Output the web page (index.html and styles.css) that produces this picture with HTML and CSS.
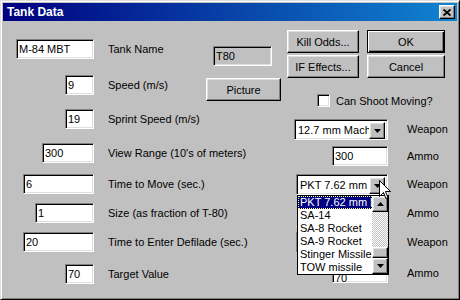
FILE: index.html
```html
<!DOCTYPE html>
<html lang="en">
<head>
  <meta charset="UTF-8">
  <title>Tank Data</title>
  <link rel="stylesheet" href="styles.css">
</head>
<body>
  <div class="window">
    <div class="titlebar">
      <span class="title">Tank Data</span>
      <div class="btn close-btn">
        <svg width="8" height="7" viewBox="0 0 8 7"><path d="M0.5 0.5L7.5 6.5M7.5 0.5L0.5 6.5" stroke="#000" stroke-width="1.8" fill="none"/></svg>
      </div>
    </div>

    <div class="body">
      <!-- left column: numeric fields + labels -->
      <div class="left">
        <div class="row">
          <div class="cell"><div class="field w78">M-84 MBT</div></div>
          <span class="label">Tank Name</span>
          <div class="field readonly t80">T80</div>
        </div>
        <div class="row">
          <div class="cell"><div class="field w29">9</div></div>
          <span class="label">Speed (m/s)</span>
          <div class="btn picture">Picture</div>
        </div>
        <div class="row">
          <div class="cell"><div class="field w29">19</div></div>
          <span class="label">Sprint Speed (m/s)</span>
        </div>
        <div class="row">
          <div class="cell"><div class="field w52">300</div></div>
          <span class="label">View Range (10's of meters)</span>
        </div>
        <div class="row">
          <div class="cell"><div class="field w71">6</div></div>
          <span class="label">Time to Move (sec.)</span>
        </div>
        <div class="row">
          <div class="cell"><div class="field w59">1</div></div>
          <span class="label">Size (as fraction of T-80)</span>
        </div>
        <div class="row">
          <div class="cell"><div class="field w71">20</div></div>
          <span class="label">Time to Enter Defilade (sec.)</span>
        </div>
        <div class="row">
          <div class="cell"><div class="field w29">70</div></div>
          <span class="label">Target Value</span>
        </div>
      </div>

      <!-- right column: buttons, checkbox, weapons -->
      <div class="right">
        <div class="buttons">
          <div class="btn">Kill Odds...</div>
          <div class="btn btn-default">OK</div>
          <div class="btn">IF Effects...</div>
          <div class="btn">Cancel</div>
        </div>

        <div class="check">
          <span class="checkbox"></span>
          <span>Can Shoot Moving?</span>
        </div>

        <div class="weapons">
          <div class="wrow">
            <div class="wcell">
              <div class="field combo w94">
                <span class="combo-text">12.7 mm Machi</span>
                <span class="btn combo-btn"><svg width="7" height="4"><path d="M0 0h7l-3.5 4z"/></svg></span>
              </div>
            </div>
            <span class="wlabel">Weapon</span>
          </div>
          <div class="wrow">
            <div class="wcell"><div class="field w56">300</div></div>
            <span class="wlabel">Ammo</span>
          </div>
          <div class="wrow">
            <div class="wcell">
              <div class="field combo w92 open">
                <span class="combo-text">PKT 7.62 mm M</span>
                <span class="btn combo-btn"><svg width="7" height="4"><path d="M0 0h7l-3.5 4z"/></svg></span>

                <div class="droplist">
                  <ul class="items">
                    <li class="selected">PKT 7.62 mm M</li>
                    <li>SA-14</li>
                    <li>SA-8 Rocket</li>
                    <li>SA-9 Rocket</li>
                    <li>Stinger Missile</li>
                    <li>TOW missile</li>
                  </ul>
                  <div class="scrollbar">
                    <span class="btn sb-btn"><svg width="7" height="4"><path d="M3.5 0l3.5 4h-7z"/></svg></span>
                    <div class="track"><span class="btn thumb"></span></div>
                    <span class="btn sb-btn"><svg width="7" height="4"><path d="M0 0h7l-3.5 4z"/></svg></span>
                  </div>
                </div>
              </div>
            </div>
            <span class="wlabel">Weapon</span>
          </div>
          <div class="wrow">
            <div class="wcell"><div class="field w56"></div></div>
            <span class="wlabel">Ammo</span>
          </div>
          <div class="wrow">
            <div class="wcell">
              <div class="field combo w92">
                <span class="combo-text"></span>
                <span class="btn combo-btn"><svg width="7" height="4"><path d="M0 0h7l-3.5 4z"/></svg></span>
              </div>
            </div>
            <span class="wlabel">Weapon</span>
          </div>
          <div class="wrow">
            <div class="wcell"><div class="field w56 low">70</div></div>
            <span class="wlabel">Ammo</span>
          </div>
        </div>
      </div>
    </div>

    <!-- mouse pointer -->
    <svg class="cursor" width="12" height="20" viewBox="0 0 12 20">
      <path d="M0.5 0.5V16.5L4.5 12.5L7 18.5L9 17.5L6.5 11.5H11.5Z" fill="#fff" stroke="#000" stroke-width="1"/>
    </svg>
  </div>
</body>
</html>
```

FILE: styles.css
```css
body {
  margin: 0;
  background: #c0c0c0;
}

/* window frame */
.window {
  position: relative;
  width: 460px;
  height: 300px;
  box-sizing: border-box;
  padding: 2px;
  background: #c0c0c0;
  border: 1px solid;
  border-color: #dfdfdf #000 #000 #dfdfdf;
  box-shadow: inset 1px 1px #fff, inset -1px -1px #808080;
  font: 11px "Liberation Sans", Arial, sans-serif;
  color: #000;
}

.titlebar {
  height: 18px;
  display: flex;
  align-items: center;
  justify-content: space-between;
  padding: 0 2px 0 4px;
  background: linear-gradient(to right, #000080, #1084d0);
}

.title {
  color: #fff;
  font-weight: bold;
  font-size: 12px;
}

/* raised button */
.btn {
  box-sizing: border-box;
  display: flex;
  align-items: center;
  justify-content: center;
  background: #c0c0c0;
  border: 1px solid;
  border-color: #fff #000 #000 #fff;
  box-shadow: inset -1px -1px #808080, inset 1px 1px #dfdfdf;
}

.btn-default {
  border-color: #000;
  box-shadow: inset 1px 1px #fff, inset -1px -1px #000, inset -2px -2px #808080;
}

.close-btn {
  width: 16px;
  height: 14px;
}

/* sunken text field */
.field {
  box-sizing: border-box;
  height: 20px;
  padding: 0 2px;
  line-height: 18px;
  background: #fff;
  border: 1px solid;
  border-color: #808080 #fff #fff #808080;
  box-shadow: inset 1px 1px #000, inset -1px -1px #dfdfdf;
  white-space: nowrap;
  overflow: hidden;
}

.field.readonly {
  background: #c0c0c0;
}

.w29 { width: 29px; }
.w52 { width: 52px; }
.w56 { width: 56px; }
.w59 { width: 59px; }
.w71 { width: 71px; }
.w78 { width: 78px; }
.w92 { width: 92px; }
.w94 { width: 94px; }

.body {
  display: flex;
}

/* left column */
.left {
  width: 284px;
  padding-top: 18px;
  display: grid;
  grid-template-rows: 36px 34px 34px 31px 29px 29px 32px 20px;
}

.row {
  display: flex;
  align-items: flex-start;
}

.cell {
  width: 91px;
  display: flex;
  justify-content: flex-end;
}

.label {
  margin-left: 14px;
  line-height: 20px;
  white-space: nowrap;
}

.t80 {
  width: 59px;
  margin: 7px 15px 0 auto;
}

.picture {
  width: 75px;
  height: 23px;
  margin: 3px 6px 0 auto;
}

/* right column */
.right {
  width: 170px;
  padding-top: 9px;
  display: flex;
  flex-direction: column;
}

.buttons {
  display: grid;
  grid-template-columns: 72px 78px;
  grid-template-rows: 23px 23px;
  column-gap: 8px;
  row-gap: 2px;
}

.check {
  margin: 16px 0 0 30px;
  height: 13px;
  display: flex;
  align-items: center;
  gap: 6px;
}

.checkbox {
  box-sizing: border-box;
  width: 13px;
  height: 13px;
  background: #fff;
  border: 1px solid;
  border-color: #808080 #fff #fff #808080;
  box-shadow: inset 1px 1px #000, inset -1px -1px #dfdfdf;
}

.weapons {
  margin-top: 12px;
  display: grid;
  grid-template-rows: 27px 28px 29px 29px 31px 21px;
}

.wrow {
  display: flex;
  align-items: flex-start;
}

.wcell {
  width: 101px;
  display: flex;
  justify-content: flex-end;
}

.wlabel {
  margin-left: 19px;
  line-height: 20px;
}

/* the ammo value mostly hidden under the open list */
.field.low {
  line-height: 28px;
}

/* combo box */
.combo {
  position: relative;
  height: 21px;
  display: flex;
  padding: 2px 2px 2px 3px;
  line-height: 17px;
  overflow: visible;
}

.combo-text {
  flex: 1;
  overflow: hidden;
  white-space: nowrap;
}

.combo-btn {
  width: 16px;
  height: 17px;
}

/* open dropdown list */
.droplist {
  position: absolute;
  top: 20px;
  left: 0;
  width: 92px;
  box-sizing: border-box;
  border: 1px solid #000;
  background: #fff;
  display: flex;
  z-index: 2;
}

.items {
  flex: 1;
  margin: 0;
  padding: 0;
  list-style: none;
  overflow: hidden;
}

.items li {
  height: 13px;
  line-height: 13px;
  padding-left: 2px;
  white-space: nowrap;
  overflow: hidden;
}

.items li.selected {
  background: #000080;
  color: #fff;
  outline: 1px dotted #ffff80;
  outline-offset: -1px;
}

.scrollbar {
  width: 16px;
  display: flex;
  flex-direction: column;
}

.sb-btn {
  width: 16px;
  height: 16px;
}

.track {
  flex: 1;
  display: flex;
  flex-direction: column;
  justify-content: flex-end;
  background: repeating-conic-gradient(#c0c0c0 0 25%, #fff 0 50%) 0 0 / 2px 2px;
}

.thumb {
  width: 16px;
  height: 11px;
}

.cursor {
  position: absolute;
  left: 378px;
  top: 179px;
  z-index: 3;
}
```
